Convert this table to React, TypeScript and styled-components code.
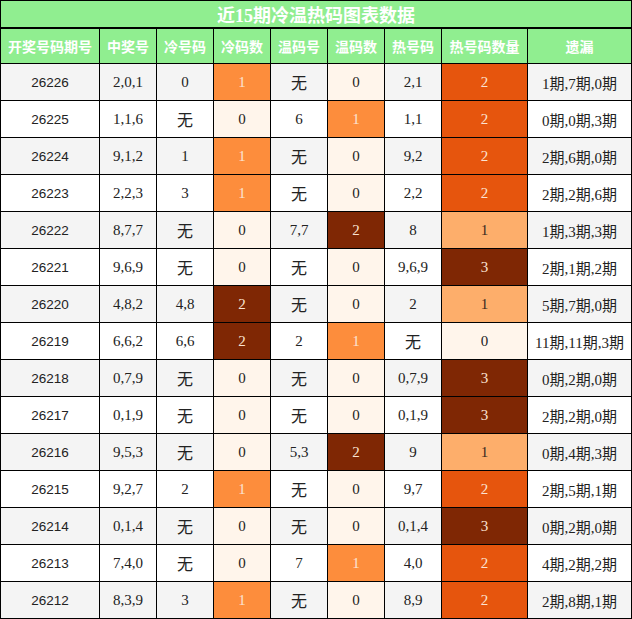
import React from "react";
import styled, { createGlobalStyle } from "styled-components";

const Global = createGlobalStyle`
  html, body { margin: 0; padding: 0; background: #fff; }
  * { box-sizing: border-box; }
`;

const Wrapper = styled.div`
  width: 632px;
  border: 1px solid #000;
  background: #90ee90;
`;

const Title = styled.div`
  height: 26px;
  border-bottom: 2px solid #000;
  display: flex;
  align-items: center;
  justify-content: center;
  color: #fff;
  font-family: "Liberation Serif", "Noto Sans CJK SC", serif;
  font-weight: bold;
  font-size: 18px;
  box-sizing: content-box;
`;

const Grid = styled.div`
  display: grid;
  grid-template-columns: 98px 56px 56px 56px 56px 56px 56px 85px 103px;
  grid-auto-rows: 36px;
  grid-template-rows: 34px;
  gap: 1px;
  background: #000;
`;

const HeadCell = styled.div`
  background: #90ee90;
  color: #fff;
  display: flex;
  align-items: center;
  justify-content: center;
  font-family: "Noto Sans CJK SC", sans-serif;
  font-weight: bold;
  font-size: 14px;
`;

type Kind = "issue" | "num" | "none" | "miss";

const Cell = styled.div<{ $bg: string; $fg: string; $kind: Kind }>`
  background: ${(p) => p.$bg};
  color: ${(p) => p.$fg};
  display: flex;
  align-items: center;
  justify-content: center;
  white-space: nowrap;
  font-family: ${(p) =>
    p.$kind === "issue"
      ? `"Liberation Sans", "Noto Sans CJK SC", sans-serif`
      : `"Liberation Serif", "Noto Sans CJK SC", serif`};
  font-size: ${(p) =>
    p.$kind === "issue" ? "13.5px" : p.$kind === "none" ? "16px" : "15px"};
`;

type Row = [string, string, string, number, string, number, string, number, string];

const rows: Row[] = [
  ["26226", "2,0,1", "0", 1, "无", 0, "2,1", 2, "1期,7期,0期"],
  ["26225", "1,1,6", "无", 0, "6", 1, "1,1", 2, "0期,0期,3期"],
  ["26224", "9,1,2", "1", 1, "无", 0, "9,2", 2, "2期,6期,0期"],
  ["26223", "2,2,3", "3", 1, "无", 0, "2,2", 2, "2期,2期,6期"],
  ["26222", "8,7,7", "无", 0, "7,7", 2, "8", 1, "1期,3期,3期"],
  ["26221", "9,6,9", "无", 0, "无", 0, "9,6,9", 3, "2期,1期,2期"],
  ["26220", "4,8,2", "4,8", 2, "无", 0, "2", 1, "5期,7期,0期"],
  ["26219", "6,6,2", "6,6", 2, "2", 1, "无", 0, "11期,11期,3期"],
  ["26218", "0,7,9", "无", 0, "无", 0, "0,7,9", 3, "0期,2期,0期"],
  ["26217", "0,1,9", "无", 0, "无", 0, "0,1,9", 3, "2期,2期,0期"],
  ["26216", "9,5,3", "无", 0, "5,3", 2, "9", 1, "0期,4期,3期"],
  ["26215", "9,2,7", "2", 1, "无", 0, "9,7", 2, "2期,5期,1期"],
  ["26214", "0,1,4", "无", 0, "无", 0, "0,1,4", 3, "0期,2期,0期"],
  ["26213", "7,4,0", "无", 0, "7", 1, "4,0", 2, "4期,2期,2期"],
  ["26212", "8,3,9", "3", 1, "无", 0, "8,9", 2, "2期,8期,1期"],
];

const headers = ["开奖号码期号", "中奖号", "冷号码", "冷码数", "温码号", "温码数", "热号码", "热号码数量", "遗漏"];

const TEXT = "#222";
const LIGHT_TEXT = "#fbe3d2";
const PALE = "#fff5eb";

const coldScale: Record<number, [string, string]> = {
  0: [PALE, TEXT],
  1: ["#fd8d3c", LIGHT_TEXT],
  2: ["#7f2704", LIGHT_TEXT],
  3: ["#7f2704", LIGHT_TEXT],
};

const hotScale: Record<number, [string, string]> = {
  0: [PALE, TEXT],
  1: ["#fdae6b", "#3a2a20"],
  2: ["#e6550d", LIGHT_TEXT],
  3: ["#7f2704", LIGHT_TEXT],
};

const kindOf = (v: string, fallback: Kind): Kind => (v === "无" ? "none" : fallback);

export default function App() {
  return (
    <>
      <Global />
      <Wrapper>
        <Title>近15期冷温热码图表数据</Title>
        <Grid>
          {headers.map((h) => (
            <HeadCell key={h}>{h}</HeadCell>
          ))}
          {rows.map((r, i) => {
            const base = i % 2 === 0 ? "#f4f4f4" : "#ffffff";
            const [cBg, cFg] = coldScale[r[3]];
            const [wBg, wFg] = coldScale[r[5]];
            const [hBg, hFg] = hotScale[r[7]];
            return (
              <React.Fragment key={r[0]}>
                <Cell $bg={base} $fg={TEXT} $kind="issue">{r[0]}</Cell>
                <Cell $bg={base} $fg={TEXT} $kind="num">{r[1]}</Cell>
                <Cell $bg={base} $fg={TEXT} $kind={kindOf(r[2], "num")}>{r[2]}</Cell>
                <Cell $bg={cBg} $fg={cFg} $kind="num">{r[3]}</Cell>
                <Cell $bg={base} $fg={TEXT} $kind={kindOf(r[4], "num")}>{r[4]}</Cell>
                <Cell $bg={wBg} $fg={wFg} $kind="num">{r[5]}</Cell>
                <Cell $bg={base} $fg={TEXT} $kind={kindOf(r[6], "num")}>{r[6]}</Cell>
                <Cell $bg={hBg} $fg={hFg} $kind="num">{r[7]}</Cell>
                <Cell $bg={base} $fg={TEXT} $kind="miss">{r[8]}</Cell>
              </React.Fragment>
            );
          })}
        </Grid>
      </Wrapper>
    </>
  );
}
